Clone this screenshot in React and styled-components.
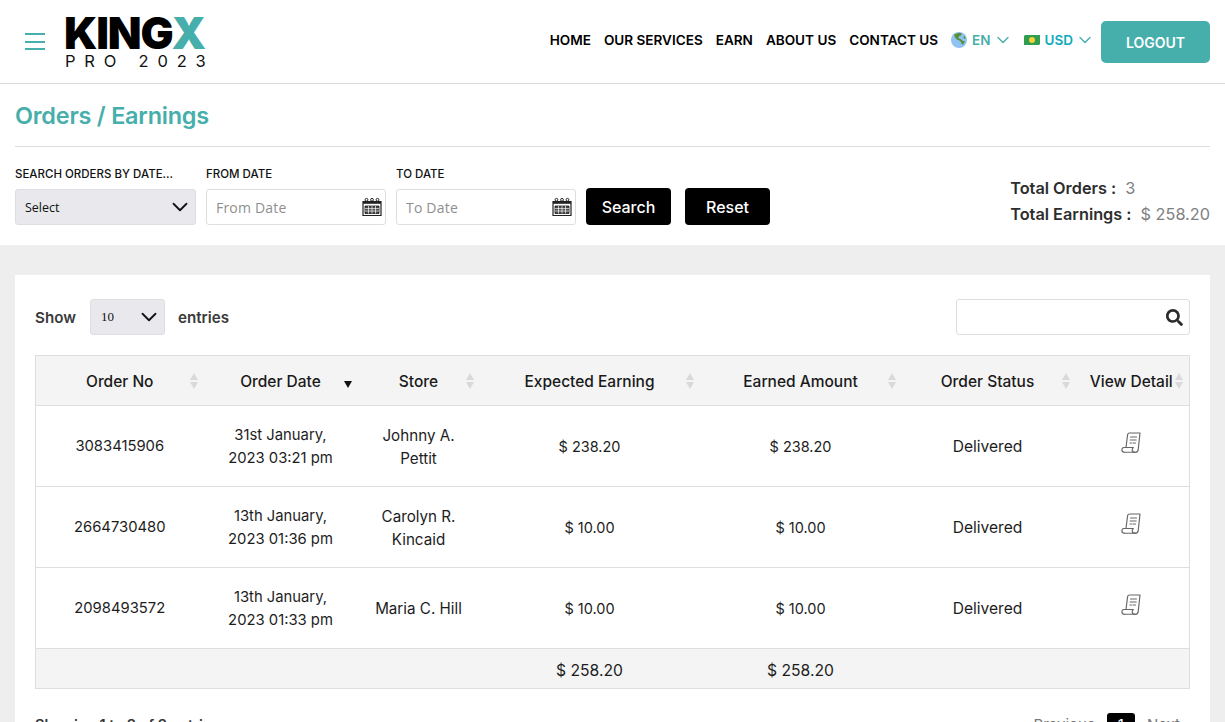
import React from "react";
import styled, { createGlobalStyle } from "styled-components";
import { ChevronDown } from "lucide-react";
import { FaSearch } from "react-icons/fa";

const teal = "#46aeab";

const GlobalStyle = createGlobalStyle`
  html, body {
    margin: 0;
    padding: 0;
    overflow: hidden;
    background: #fff;
  }
  body {
    font-family: "Inter", "Noto Sans", sans-serif;
    color: #212121;
  }
  * { box-sizing: border-box; }
`;

const Header = styled.header`
  height: 84px;
  display: flex;
  align-items: center;
  justify-content: space-between;
  padding: 0 15px 0 25px;
  border-bottom: 1px solid #dcdcdc;
`;

const Brand = styled.div`
  display: flex;
  align-items: center;
  gap: 20px;
`;

const Burger = styled.div`
  width: 20px;
  display: flex;
  flex-direction: column;
  gap: 5.5px;
  span {
    height: 2px;
    background: ${teal};
  }
`;

const Logo = styled.div`
  display: flex;
  flex-direction: column;
  margin: 0 0 0 -1px;
`;

const LogoMain = styled.div`
  font-size: 44px;
  font-weight: 900;
  line-height: 36px;
  letter-spacing: -1.2px;
  color: #000;
  em {
    font-style: normal;
    color: ${teal};
  }
`;

const LogoSub = styled.div`
  font-size: 16.5px;
  line-height: 16px;
  margin: 2px 0 0 1px;
  letter-spacing: 8.8px;
  color: #111;
  white-space: pre;
`;

const Nav = styled.nav`
  display: flex;
  align-items: center;
`;

const NavLink = styled.a`
  font-size: 13.55px;
  font-weight: 600;
  color: #000;
  margin-right: 13px;
  padding-bottom: 4px;
  white-space: nowrap;
`;

const Picker = styled.div`
  display: flex;
  align-items: center;
  gap: 5px;
  margin-right: ${(p) => p.$gap}px;
  padding-bottom: 4px;
  font-size: 13.5px;
  font-weight: 600;
  color: ${(p) => p.$color};
  svg.chev {
    margin-left: -3px;
    color: ${teal};
  }
`;

const LogoutButton = styled.button`
  width: 109px;
  height: 42px;
  border: 0;
  border-radius: 5px;
  padding-top: 2px;
  background: ${teal};
  color: #fff;
  font: 600 14px "Inter", sans-serif;
  margin-left: 6px;
`;

const TopSection = styled.section`
  height: 161px;
  padding: 0 15px;
`;

const Title = styled.h1`
  margin: 0;
  height: 63px;
  display: flex;
  align-items: center;
  font-size: 23.4px;
  font-weight: 600;
  letter-spacing: -0.2px;
  color: ${teal};
  border-bottom: 1px solid #dcdcdc;
`;

const FilterRow = styled.div`
  display: flex;
  align-items: flex-end;
  margin-top: 19px;
`;

const Field = styled.div`
  width: ${(p) => p.$width}px;
  margin-right: 10px;
  label {
    display: block;
    font-size: 11.5px;
    font-weight: 500;
    line-height: 16px;
    margin-bottom: 7px;
    color: #111;
    white-space: nowrap;
  }
`;

const SelectBox = styled.div`
  height: 36px;
  width: ${(p) => (p.$w ? `${p.$w}px` : "100%")};
  display: flex;
  align-items: center;
  justify-content: space-between;
  padding: 0 2px 0 ${(p) => (p.$serif ? 10 : 9)}px;
  background: #e9e9ed;
  border: 1px solid #dedee2;
  border-radius: 3px;
  font-family: ${(p) => (p.$serif ? '"Liberation Serif", serif' : '"Open Sans", sans-serif')};
  font-size: ${(p) => (p.$serif ? 13 : 12.5)}px;
  font-weight: 400;
  color: #111;
`;

const DateBox = styled.div`
  height: 36px;
  display: flex;
  align-items: center;
  padding: 0 3px 0 9px;
  background: #fff;
  border: 1px solid #dedede;
  border-radius: 3px;
  input {
    flex: 1;
    min-width: 0;
    border: 0;
    outline: 0;
    padding: 0;
    font: 14px "Open Sans", sans-serif;
    letter-spacing: 0.2px;
  }
  input::placeholder {
    color: #8f8f8f;
    opacity: 1;
  }
`;

const ActionButton = styled.button`
  width: 85px;
  height: 37px;
  margin-right: ${(p) => p.$gap}px;
  border: 0;
  border-radius: 4px;
  background: #000;
  color: #fff;
  font: 500 16px "Inter", sans-serif;
`;

const Totals = styled.div`
  margin: 0 0 1px auto;
  display: flex;
  flex-direction: column;
  gap: 6px;
  font-size: 16.3px;
  line-height: 20px;
  b {
    font-weight: 600;
    color: #2d2d2d;
    margin-right: 9px;
  }
  span {
    color: #7f7f7f;
  }
`;

const TotalRow = styled.div`
  white-space: nowrap;
`;

const Main = styled.main`
  background: #eeeeee;
  padding: 30px 15px 0;
`;

const Card = styled.div`
  background: #fff;
  padding: 24px 20px 0;
  height: 500px;
`;

const TableTop = styled.div`
  display: flex;
  align-items: center;
  height: 36px;
  font-size: 15.2px;
  font-weight: 600;
  color: #3a3a3a;
`;

const EntriesSelect = styled.div`
  margin: 0 13px 0 14px;
`;

const TableSearch = styled.div`
  width: 234px;
  height: 36px;
  margin-left: auto;
  display: flex;
  align-items: center;
  justify-content: flex-end;
  padding-right: 6px;
  border: 1px solid #dedede;
  border-radius: 3px;
  color: #2b2b2b;
`;

const Table = styled.table`
  width: 100%;
  margin-top: 20px;
  border-collapse: collapse;
  table-layout: fixed;
  color: #1d1d1d;
  border: 1px solid #dedede;
`;

const HeadCell = styled.th`
  position: relative;
  height: 50px;
  padding: 1px 0 0;
  font-size: 15.5px;
  font-weight: 500;
  background: #f4f4f4;
  border-bottom: 1px solid #dedede;
  color: #1a1a1a;
  white-space: nowrap;
`;

const SortMark = styled.span`
  position: absolute;
  right: ${(p) => p.$right}px;
  top: 17px;
  width: 8px;
  height: 16px;
  &::before,
  &::after {
    content: "";
    position: absolute;
    left: 0;
    border-left: 4px solid transparent;
    border-right: 4px solid transparent;
  }
  &::before {
    top: 0;
    border-bottom: 7px solid #d9d9d9;
  }
  &::after {
    bottom: 0;
    border-top: 7px solid #d9d9d9;
  }
`;

const SortDown = styled.span`
  position: absolute;
  right: 6px;
  top: 25px;
  border-left: 4.5px solid transparent;
  border-right: 4.5px solid transparent;
  border-top: 7px solid #111;
`;

const Cell = styled.td`
  height: 81px;
  padding: 1px 0 0;
  text-align: center;
  font-size: ${(p) => p.$size || 14.8}px;
  line-height: 23px;
  border-bottom: 1px solid #dedede;
`;

const FootCell = styled.td`
  height: 40px;
  padding: 3px 0 0;
  text-align: center;
  background: #f4f4f4;
  font-size: 15.7px;
`;

const TableBottom = styled.div`
  display: flex;
  justify-content: space-between;
  margin-top: 24px;
  font-size: 14.5px;
  color: #333;
`;

const ShowingText = styled.div`
  padding-top: 3px;
  font-weight: 600;
`;

const Pager = styled.div`
  display: flex;
  align-items: flex-start;
  gap: 12px;
  color: #777;
  margin-right: 10px;
  font-size: 15px;
  span {
    padding-top: 2px;
  }
`;

const PageNum = styled.div`
  width: 28px;
  height: 30px;
  display: flex;
  justify-content: center;
  padding-top: 2px;
  border-radius: 3px;
  background: #000;
  color: #fff;
`;

const Globe = () => (
  <svg width="16" height="16" viewBox="0 0 16 16">
    <circle cx="8" cy="8" r="8" fill="#8ec3f2" />
    <path d="M3 2.5 8 .8l3 .6-1 2.2-2 .6-.6 2 2.2.8 1.6 1.6 2.8 1-1.8 3-1.6-.3-.6-2.4-2-1.6-2-.6-2-2.4z" fill="#5c8f39" />
    <path d="M13 3.5l1.6 2.2-.8 1.4-1.4-1.4z" fill="#5c8f39" />
  </svg>
);

const Money = () => (
  <svg width="16" height="10" viewBox="0 0 16 10">
    <path d="M1.5 0H16v8.5a1.5 1.5 0 0 1-1.5 1.5H0V1.5A1.5 1.5 0 0 1 1.5 0z" fill="#2f9e4f" />
    <circle cx="8" cy="5" r="3" fill="#f6cf3c" />
  </svg>
);

const CalendarIcon = () => (
  <svg width="20" height="20" viewBox="0 0 20 20" fill="none" stroke="#222">
    <path d="M1 4.5h18v14H1z" strokeWidth="1.2" />
    <circle cx="4.5" cy="2.8" r="1.4" strokeWidth="1" />
    <circle cx="10" cy="2.8" r="1.4" strokeWidth="1" />
    <circle cx="15.5" cy="2.8" r="1.4" strokeWidth="1" />
    <path d="M1 5.8h18" strokeWidth="2" />
    <path d="M3 9h14v7.5H3z" fill="#444" strokeWidth="0.8" />
    <path d="M3 11.6h14M3 14h14M6.5 9v7.5M10 9v7.5M13.5 9v7.5" stroke="#fff" strokeWidth="0.7" />
  </svg>
);

const ReceiptIcon = () => (
  <svg width="20" height="22" viewBox="0 0 20 22" fill="none" stroke="#666" strokeWidth="1.15" strokeLinecap="round" strokeLinejoin="round">
    <path d="M5 15.5 6.6 2.6A2 2 0 0 1 8.5 1H19l-1.8 16.6a2.8 2.8 0 0 1-2.8 2.6H3.2" />
    <path d="M3.2 20.2A2.4 2.4 0 0 1 .9 17.8c0-1.3.7-2.3 2-2.3h9.5c-.9.7-1.2 1.6-1.2 2.4 0 1.3 1.2 2.3 3.2 2.3" />
    <path d="M9.5 5h6M9.2 8h6M9 11h1.5M12 11h2.5" />
  </svg>
);

const columns = [
  { title: "Order No", width: 168, right: 6 },
  { title: "Order Date", width: 154, active: true },
  { title: "Store", width: 122, right: 6 },
  { title: "Expected Earning", width: 220, right: 6 },
  { title: "Earned Amount", width: 202, right: 6 },
  { title: "Order Status", width: 172, right: 4 },
  { title: "View Detail", width: 116, right: 6 },
];

const orders = [
  { no: "3083415906", date: ["31st January,", "2023 03:21 pm"], store: ["Johnny A.", "Pettit"], expected: "$ 238.20", earned: "$ 238.20" },
  { no: "2664730480", date: ["13th January,", "2023 01:36 pm"], store: ["Carolyn R.", "Kincaid"], expected: "$ 10.00", earned: "$ 10.00" },
  { no: "2098493572", date: ["13th January,", "2023 01:33 pm"], store: ["Maria C. Hill"], expected: "$ 10.00", earned: "$ 10.00" },
];

const Lines = ({ items }) =>
  items.map((line, i) => (
    <React.Fragment key={line}>
      {i > 0 && <br />}
      {line}
    </React.Fragment>
  ));

export default function App() {
  return (
    <>
      <GlobalStyle />
      <Header>
        <Brand>
          <Burger>
            <span />
            <span />
            <span />
          </Burger>
          <Logo>
            <LogoMain>
              KING<em>X</em>
            </LogoMain>
            <LogoSub>PRO 2023</LogoSub>
          </Logo>
        </Brand>
        <Nav>
          <NavLink>HOME</NavLink>
          <NavLink>OUR SERVICES</NavLink>
          <NavLink>EARN</NavLink>
          <NavLink>ABOUT US</NavLink>
          <NavLink>CONTACT US</NavLink>
          <Picker $color={teal} $gap={11}>
            <Globe />
            EN
            <ChevronDown className="chev" size={20} strokeWidth={1.6} />
          </Picker>
          <Picker $color="#0eaabb" $gap={0}>
            <Money />
            USD
            <ChevronDown className="chev" size={20} strokeWidth={1.6} />
          </Picker>
          <LogoutButton>LOGOUT</LogoutButton>
        </Nav>
      </Header>

      <TopSection>
        <Title>Orders / Earnings</Title>
        <FilterRow>
          <Field $width={181}>
            <label>SEARCH ORDERS BY DATE...</label>
            <SelectBox>
              Select
              <ChevronDown size={26} strokeWidth={1.7} color="#111" />
            </SelectBox>
          </Field>
          <Field $width={180}>
            <label>FROM DATE</label>
            <DateBox>
              <input placeholder="From Date" />
              <CalendarIcon />
            </DateBox>
          </Field>
          <Field $width={180}>
            <label>TO DATE</label>
            <DateBox>
              <input placeholder="To Date" />
              <CalendarIcon />
            </DateBox>
          </Field>
          <ActionButton $gap={14}>Search</ActionButton>
          <ActionButton $gap={0}>Reset</ActionButton>
          <Totals>
            <TotalRow>
              <b>Total Orders :</b>
              <span>3</span>
            </TotalRow>
            <TotalRow>
              <b>Total Earnings :</b>
              <span>$ 258.20</span>
            </TotalRow>
          </Totals>
        </FilterRow>
      </TopSection>

      <Main>
        <Card>
          <TableTop>
            <span>Show</span>
            <EntriesSelect>
              <SelectBox $w={75} $serif>
                10
                <ChevronDown size={26} strokeWidth={1.7} color="#111" />
              </SelectBox>
            </EntriesSelect>
            <span>entries</span>
            <TableSearch>
              <FaSearch size={17} />
            </TableSearch>
          </TableTop>

          <Table>
            <colgroup>
              {columns.map((c) => (
                <col key={c.title} style={{ width: c.width }} />
              ))}
            </colgroup>
            <thead>
              <tr>
                {columns.map((c) => (
                  <HeadCell key={c.title}>
                    {c.title}
                    {c.active ? <SortDown /> : <SortMark $right={c.right} />}
                  </HeadCell>
                ))}
              </tr>
            </thead>
            <tbody>
              {orders.map((o) => (
                <tr key={o.no}>
                  <Cell>{o.no}</Cell>
                  <Cell>
                    <Lines items={o.date} />
                  </Cell>
                  <Cell $size={15.2}>
                    <Lines items={o.store} />
                  </Cell>
                  <Cell $size={14.5}>{o.expected}</Cell>
                  <Cell $size={14.5}>{o.earned}</Cell>
                  <Cell $size={15.6}>Delivered</Cell>
                  <Cell>
                    <ReceiptIcon />
                  </Cell>
                </tr>
              ))}
            </tbody>
            <tfoot>
              <tr>
                <FootCell />
                <FootCell />
                <FootCell />
                <FootCell>$ 258.20</FootCell>
                <FootCell>$ 258.20</FootCell>
                <FootCell />
                <FootCell />
              </tr>
            </tfoot>
          </Table>

          <TableBottom>
            <ShowingText>Showing 1 to 3 of 3 entries</ShowingText>
            <Pager>
              <span>Previous</span>
              <PageNum>1</PageNum>
              <span>Next</span>
            </Pager>
          </TableBottom>
        </Card>
      </Main>
    </>
  );
}
